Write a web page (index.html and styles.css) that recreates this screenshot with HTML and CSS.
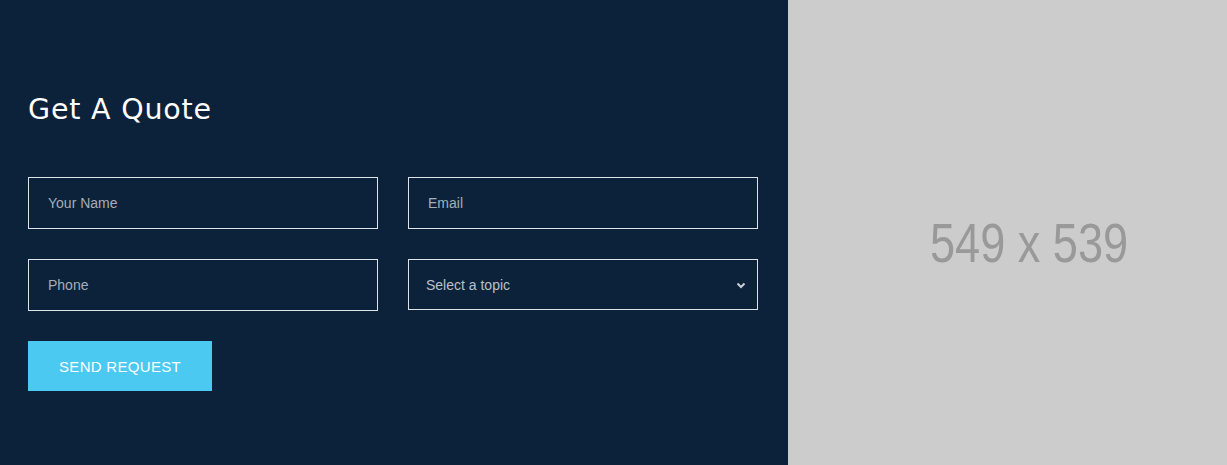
FILE: index.html
```html
<!DOCTYPE html>
<html>
<head>
<meta charset="utf-8">
<link rel="stylesheet" href="styles.css">
</head>
<body>
<div class="page">
  <section class="quote">
    <h2 class="title">Get A Quote</h2>
    <form class="form">
      <div class="row">
        <div class="field"><span class="ph">Your Name</span></div>
        <div class="field"><span class="ph">Email</span></div>
      </div>
      <div class="row">
        <div class="field"><span class="ph">Phone</span></div>
        <div class="field select"><span class="ph sel">Select a topic</span>
          <svg class="chev" width="10" height="7" viewBox="0 0 10 7"><path d="M1.5 1.5 L5 5 L8.5 1.5" fill="none" stroke="#c9ced6" stroke-width="2"/></svg>
        </div>
      </div>
      <div class="btn">SEND REQUEST</div>
    </form>
  </section>
  <aside class="image">
    <span class="dims">549 x 539</span>
  </aside>
</div>
</body>
</html>
```

FILE: styles.css
```css
html, body { margin: 0; padding: 0; }
body { font-family: "Liberation Sans", Arial, sans-serif; background: #0c223a; }
.page { display: flex; width: 1227px; height: 465px; overflow: hidden; }
.quote { width: 788px; flex: none; box-sizing: border-box; background: #0c223a; padding: 92px 30px 0 28px; }
.title { margin: 0; font-family: "DejaVu Sans", sans-serif; font-weight: normal; font-size: 28.5px; line-height: 36px; color: #fff; letter-spacing: 0.8px; }
.form { margin-top: 49px; display: flex; flex-direction: column; }
.row { display: grid; grid-template-columns: 1fr 1fr; column-gap: 30px; margin-bottom: 30px; }
.field { height: 52px; box-sizing: border-box; border: 1px solid #dfe3e8; display: flex; align-items: center; padding-left: 19px; }
.field.select { height: 51px; padding-left: 17px; padding-right: 11px; justify-content: space-between; }
.ph { font-size: 14px; color: #a4adb8; }
.ph.sel { color: #b9c0c9; }
.chev { display: block; margin-top: 2px; }
.btn { width: 184px; height: 50px; background: #4bc9f0; color: #fff; display: flex; align-items: center; justify-content: center; font-size: 15px; letter-spacing: 0.3px; }
.image { flex: 1; background: #cccccc; display: flex; align-items: center; padding-left: 142px; padding-top: 20px; box-sizing: border-box; }
.dims { display: inline-block; font-size: 55px; color: #999999; white-space: nowrap; transform: scaleX(0.82); transform-origin: left center; }
```
